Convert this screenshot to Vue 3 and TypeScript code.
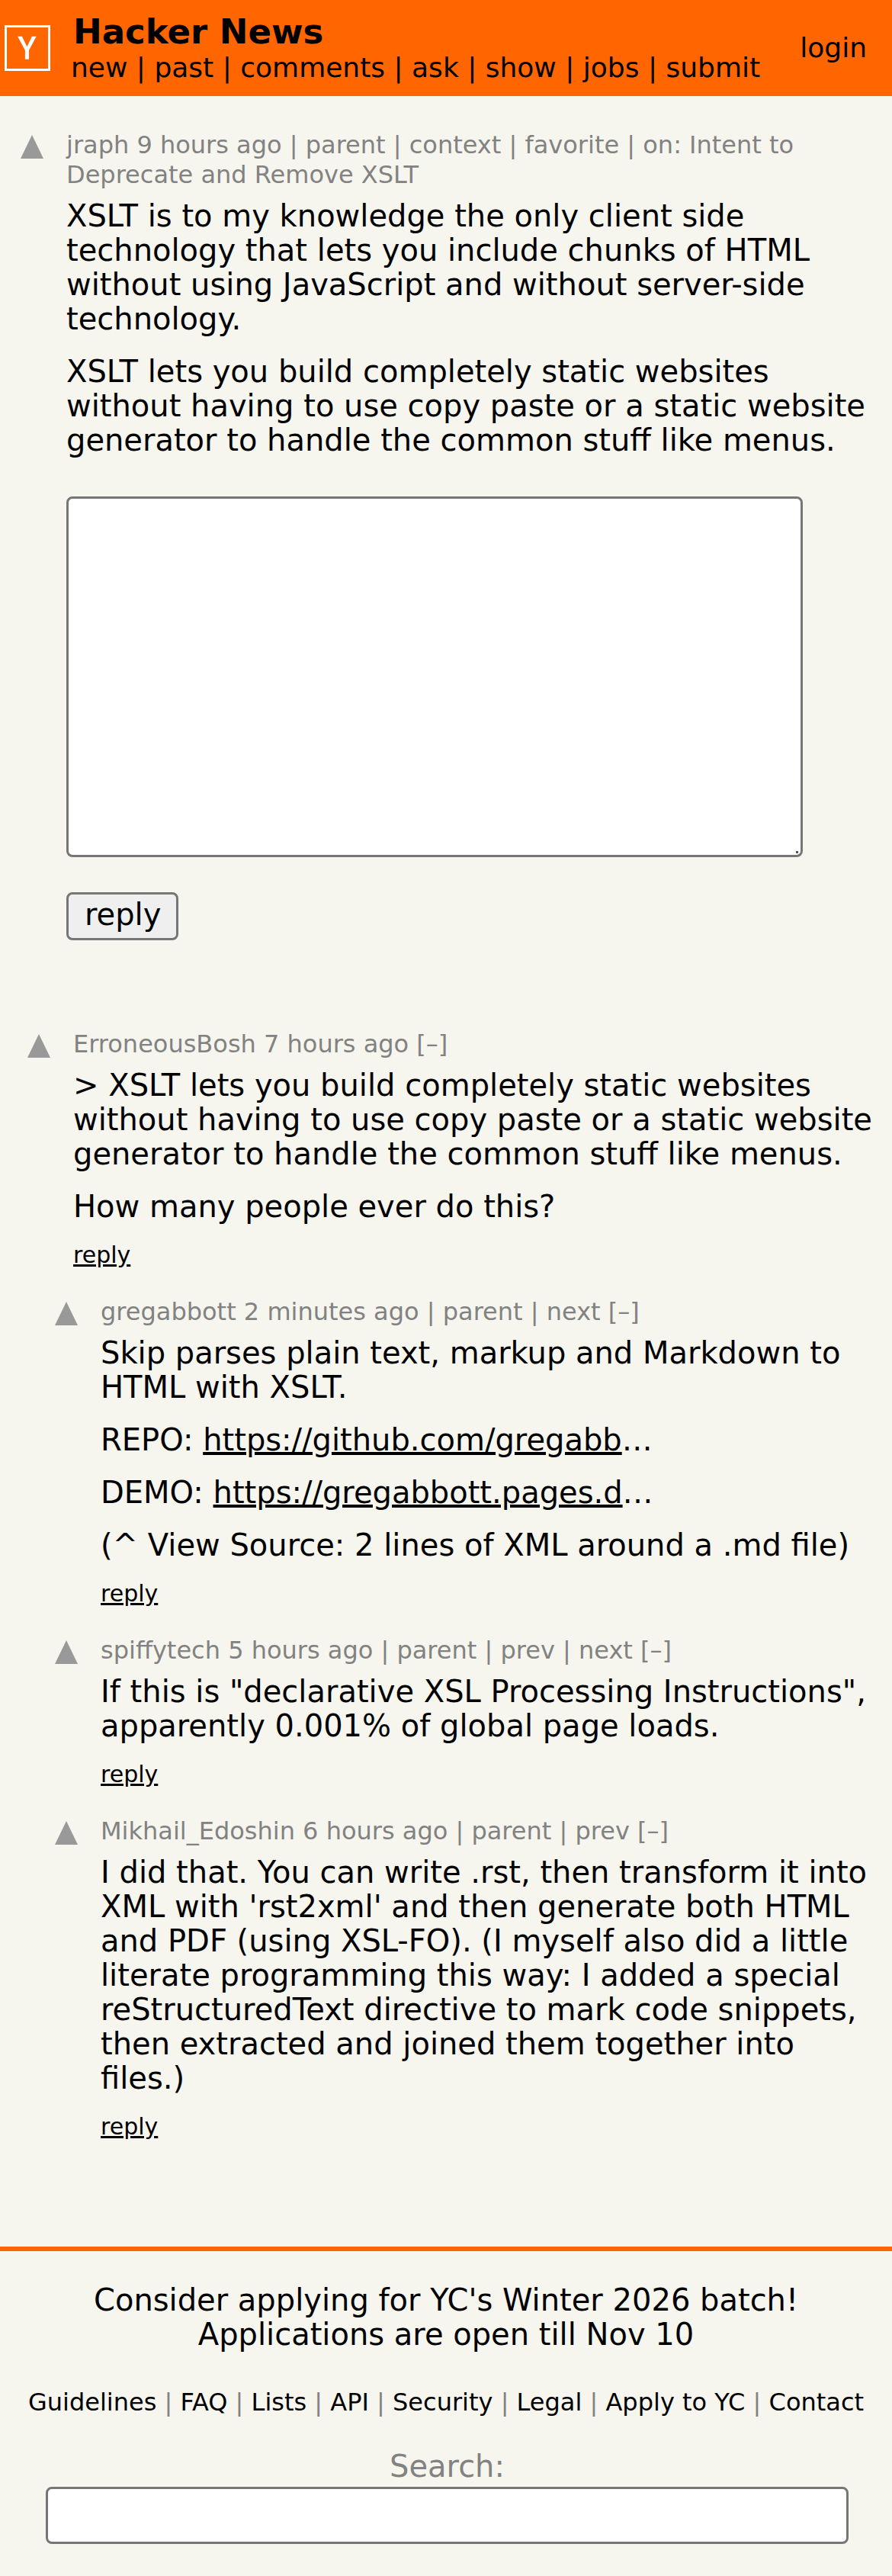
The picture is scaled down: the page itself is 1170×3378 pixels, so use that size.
<script setup lang="ts">
import { ref } from 'vue'

interface Part {
  text: string
  href?: string
}

interface Comment {
  id: number
  author: string
  age: string
  links: string[]
  depth: number
  paragraphs: Part[][]
}

const navLinks: string[] = ['new', 'past', 'comments', 'ask', 'show', 'jobs', 'submit']
const itemLinks: string[] = ['parent', 'context', 'favorite']
const footerLinks: string[] = ['Guidelines', 'FAQ', 'Lists', 'API', 'Security', 'Legal', 'Apply to YC', 'Contact']

const itemParagraphs: string[] = [
  'XSLT is to my knowledge the only client side technology that lets you include chunks of HTML without using JavaScript and without server-side technology.',
  'XSLT lets you build completely static websites without having to use copy paste or a static website generator to handle the common stuff like menus.',
]

const comments: Comment[] = [
  {
    id: 1,
    author: 'ErroneousBosh',
    age: '7 hours ago',
    links: [],
    depth: 0,
    paragraphs: [
      [{ text: '> XSLT lets you build completely static websites without having to use copy paste or a static website generator to handle the common stuff like menus.' }],
      [{ text: 'How many people ever do this?' }],
    ],
  },
  {
    id: 2,
    author: 'gregabbott',
    age: '2 minutes ago',
    links: ['parent', 'next'],
    depth: 1,
    paragraphs: [
      [{ text: 'Skip parses plain text, markup and Markdown to HTML with XSLT.' }],
      [{ text: 'REPO: ' }, { text: 'https://github.com/gregabb', href: '#repo' }, { text: '…' }],
      [{ text: 'DEMO: ' }, { text: 'https://gregabbott.pages.d', href: '#demo' }, { text: '…' }],
      [{ text: '(^ View Source: 2 lines of XML around a .md file)' }],
    ],
  },
  {
    id: 3,
    author: 'spiffytech',
    age: '5 hours ago',
    links: ['parent', 'prev', 'next'],
    depth: 1,
    paragraphs: [
      [{ text: 'If this is "declarative XSL Processing Instructions", apparently 0.001% of global page loads.' }],
    ],
  },
  {
    id: 4,
    author: 'Mikhail_Edoshin',
    age: '6 hours ago',
    links: ['parent', 'prev'],
    depth: 1,
    paragraphs: [
      [{ text: "I did that. You can write .rst, then transform it into XML with 'rst2xml' and then generate both HTML and PDF (using XSL-FO). (I myself also did a little literate programming this way: I added a special reStructuredText directive to mark code snippets, then extracted and joined them together into files.)" }],
    ],
  },
]

const replyText = ref('')
const query = ref('')
</script>

<template>
  <div class="page">
    <header class="topbar">
      <a class="logo" href="#home" aria-label="Home">
        <svg viewBox="4 4 188 188" aria-hidden="true">
          <path d="M53.4 45h19.85L96 92.1 118.75 45h19.85l-33.8 63.4v41.3H87.2v-41.3z" fill="#fff" />
        </svg>
      </a>
      <div class="titles">
        <a class="site" href="#news">Hacker News</a>
        <nav class="nav">
          <template v-for="(link, i) in navLinks" :key="link"><template v-if="i > 0"> | </template><a :href="'#' + link">{{ link }}</a></template>
        </nav>
      </div>
      <a class="login" href="#login">login</a>
    </header>

    <main>
      <article class="item">
        <button class="vote" type="button" aria-label="upvote">
          <svg viewBox="0 0 30 31" aria-hidden="true"><path d="M15 0 30 31H0z" /></svg>
        </button>
        <div class="content">
          <div class="comhead">
            <a href="#jraph">jraph</a> <a href="#age">9 hours ago</a><template v-for="link in itemLinks" :key="link"> | <a :href="'#' + link">{{ link }}</a></template> | on: <a href="#story">Intent to Deprecate and Remove XSLT</a>
          </div>
          <div class="text">
            <p v-for="(paragraph, i) in itemParagraphs" :key="i">{{ paragraph }}</p>
          </div>
          <form class="reply-form" @submit.prevent>
            <div class="field">
              <textarea v-model="replyText" aria-label="Comment"></textarea>
              <span class="grip" aria-hidden="true"></span>
            </div>
            <button class="submit" type="submit">reply</button>
          </form>
        </div>
      </article>

      <section class="thread">
        <article v-for="comment in comments" :key="comment.id" class="comment" :class="{ nested: comment.depth > 0 }">
          <button class="vote" type="button" aria-label="upvote">
            <svg viewBox="0 0 30 31" aria-hidden="true"><path d="M15 0 30 31H0z" /></svg>
          </button>
          <div class="content">
            <div class="comhead">
              <a :href="'#' + comment.author">{{ comment.author }}</a> <a href="#age">{{ comment.age }}</a><template v-for="link in comment.links" :key="link"> | <a :href="'#' + link">{{ link }}</a></template> <a href="#toggle">[–]</a>
            </div>
            <div class="text">
              <p v-for="(paragraph, i) in comment.paragraphs" :key="i"><template v-for="(part, j) in paragraph" :key="j"><a v-if="part.href" :href="part.href">{{ part.text }}</a><template v-else>{{ part.text }}</template></template></p>
            </div>
            <div class="reply"><a href="#reply">reply</a></div>
          </div>
        </article>
      </section>
    </main>

    <footer class="footer">
      <a class="apply" href="#apply">Consider applying for YC's Winter 2026 batch! Applications are open till Nov 10</a>
      <nav class="links">
        <template v-for="(link, i) in footerLinks" :key="link"><template v-if="i > 0"> | </template><a :href="'#' + link">{{ link }}</a></template>
      </nav>
      <form class="search" @submit.prevent>
        <label for="search">Search:</label>
        <input id="search" v-model="query" type="text" />
      </form>
    </footer>
  </div>
</template>

<style>
body {
  margin: 0;
  background: #f6f6ef;
}
</style>

<style scoped>
.page {
  font-family: "DejaVu Sans", Verdana, sans-serif;
  font-size: 40px;
  line-height: 45px;
  color: #000;
  background: #f6f6ef;
}

a {
  color: inherit;
  text-decoration: none;
}

.topbar {
  display: flex;
  align-items: center;
  box-sizing: border-box;
  min-height: 126px;
  padding: 0 33px 0 6px;
  background: #ff6600;
}

.logo {
  flex: none;
  box-sizing: border-box;
  width: 60px;
  height: 60px;
  border: 3px solid #fff;
}

.logo svg {
  display: block;
  width: 100%;
  height: 100%;
}

.titles {
  flex: 1;
  margin-left: 27px;
}

.site {
  display: block;
  margin-left: 3px;
  font-size: 45px;
  line-height: 52px;
  font-weight: bold;
}

.nav,
.login {
  font-size: 36px;
  line-height: 42px;
  white-space: nowrap;
}

.item,
.comment {
  display: flex;
  align-items: flex-start;
}

.item {
  padding: 45px 24px 0 27px;
}

.comment {
  padding: 0 20px 37px 36px;
}

.comment.nested {
  padding-left: 72px;
}

.vote {
  flex: none;
  margin: 6px 30px 0 0;
  padding: 0;
  border: 0;
  background: none;
}

.vote svg {
  display: block;
  width: 30px;
  height: 31px;
  fill: #999;
}

.content {
  flex: 1;
  min-width: 0;
}

.comhead {
  margin-bottom: 12px;
  font-size: 32px;
  line-height: 39px;
  color: #828282;
}

.text p {
  margin: 0 0 24px;
}

.text p:last-child {
  margin-bottom: 0;
}

.text a,
.reply a {
  text-decoration: underline;
}

.reply {
  margin-top: 23px;
  font-size: 30px;
  line-height: 36px;
}

.reply-form {
  padding: 51px 0 117px;
}

.field {
  position: relative;
  max-width: 966px;
  margin-bottom: 46px;
}

textarea,
input,
.submit {
  box-sizing: border-box;
  border: 3px solid #767676;
  border-radius: 8px;
  font: inherit;
}

textarea {
  display: block;
  width: 100%;
  height: 473px;
  padding: 6px;
  background: #fff;
  resize: none;
}

.grip {
  position: absolute;
  right: 6px;
  bottom: 5px;
  width: 3px;
  height: 3px;
  background: #555;
}

.submit {
  display: block;
  height: 63px;
  padding: 0 20px 4px 21px;
  background: #efefef;
  color: #000;
}

.footer {
  margin-top: 102px;
  padding: 42px 0;
  border-top: 6px solid #ff6600;
  text-align: center;
}

.apply {
  display: block;
  max-width: 1000px;
  margin: 0 auto 47px;
}

.links {
  margin-bottom: 42px;
  font-size: 32px;
  line-height: 39px;
  color: #828282;
}

.links a {
  color: #000;
}

.search {
  padding: 0 57px 0 60px;
  color: #828282;
}

.search label {
  display: block;
  margin-bottom: 4px;
}

.search input {
  display: block;
  width: 100%;
  height: 75px;
  padding: 0 9px;
  background: #fff;
}
</style>
